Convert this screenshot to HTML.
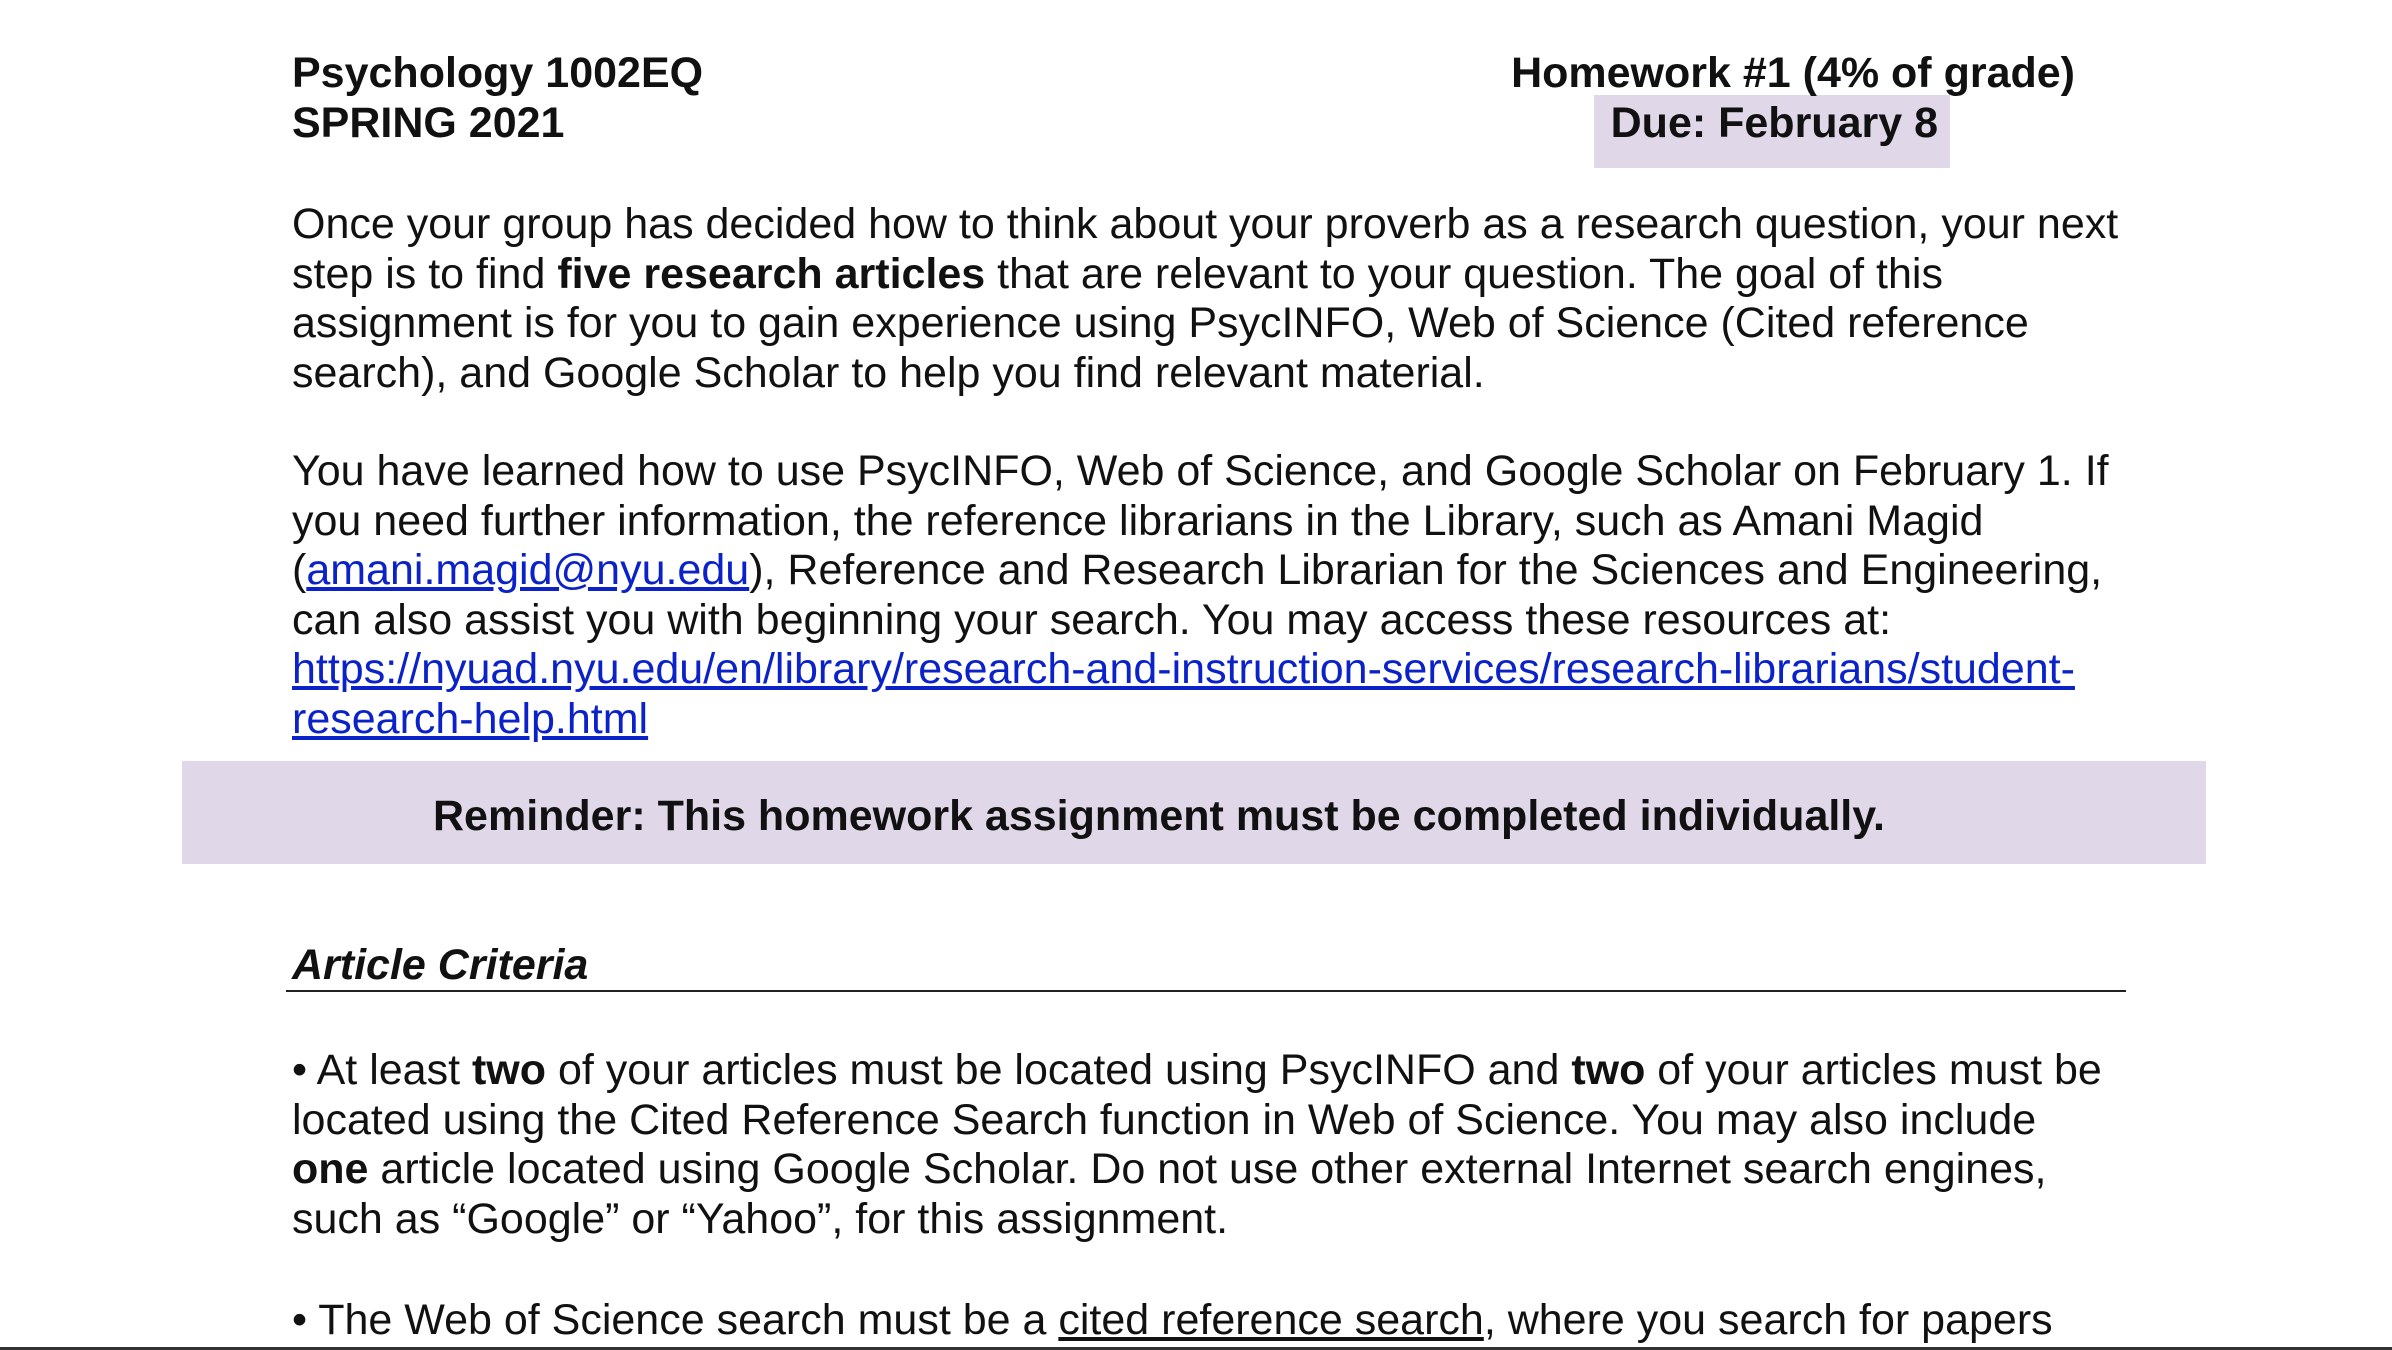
<!DOCTYPE html>
<html><head><meta charset="utf-8"><style>
body{margin:0;width:2392px;height:1350px;background:#fff;position:relative;overflow:hidden;font-family:"Liberation Sans",Arial,sans-serif;color:#111;}
.b{position:absolute;left:292px;font-size:43px;line-height:49.6px;white-space:nowrap;}
a{color:#0b22c8;text-decoration:underline;}
.u{text-decoration:underline;}
</style></head><body>
<div class="b" style="top:49px;font-weight:bold;">Psychology 1002EQ<br>SPRING 2021</div>
<div style="position:absolute;left:1594px;top:95px;width:356px;height:73px;background:#e0d7e9;"></div>
<div class="b" style="top:49px;left:auto;right:317px;font-weight:bold;text-align:right;">Homework #1 (4% of grade)<br><span style="margin-right:137px">Due: February 8</span></div>
<div class="b" style="top:200px;">Once your group has decided how to think about your proverb as a research question, your next<br>step is to find <b>five research articles</b> that are relevant to your question. The goal of this<br>assignment is for you to gain experience using PsycINFO, Web of Science (Cited reference<br>search), and Google Scholar to help you find relevant material.</div>
<div class="b" style="top:447px;">You have learned how to use PsycINFO, Web of Science, and Google Scholar on February 1. If<br>you need further information, the reference librarians in the Library, such as Amani Magid<br>(<a>amani.magid@nyu.edu</a>), Reference and Research Librarian for the Sciences and Engineering,<br>can also assist you with beginning your search. You may access these resources at:<br><a>https://nyuad.nyu.edu/en/library/research-and-instruction-services/research-librarians/student-</a><br><a>research-help.html</a></div>
<div style="position:absolute;left:182px;top:761px;width:2024px;height:103px;background:#e0d7e9;"></div>
<div class="b" style="top:792px;left:433px;font-weight:bold;">Reminder: This homework assignment must be completed individually.</div>
<div class="b" style="top:941px;font-weight:bold;font-style:italic;">Article Criteria</div>
<div style="position:absolute;left:286px;top:990px;width:1840px;height:2px;background:#222;"></div>
<div class="b" style="top:1046px;">• At least <b>two</b> of your articles must be located using PsycINFO and <b>two</b> of your articles must be<br>located using the Cited Reference Search function in Web of Science. You may also include<br><b>one</b> article located using Google Scholar. Do not use other external Internet search engines,<br>such as “Google” or “Yahoo”, for this assignment.</div>
<div class="b" style="top:1296px;">• The Web of Science search must be a <span class="u">cited reference search</span>, where you search for papers</div>
<div style="position:absolute;left:0;top:1347px;width:2392px;height:3px;background:#333;"></div>
</body></html>
